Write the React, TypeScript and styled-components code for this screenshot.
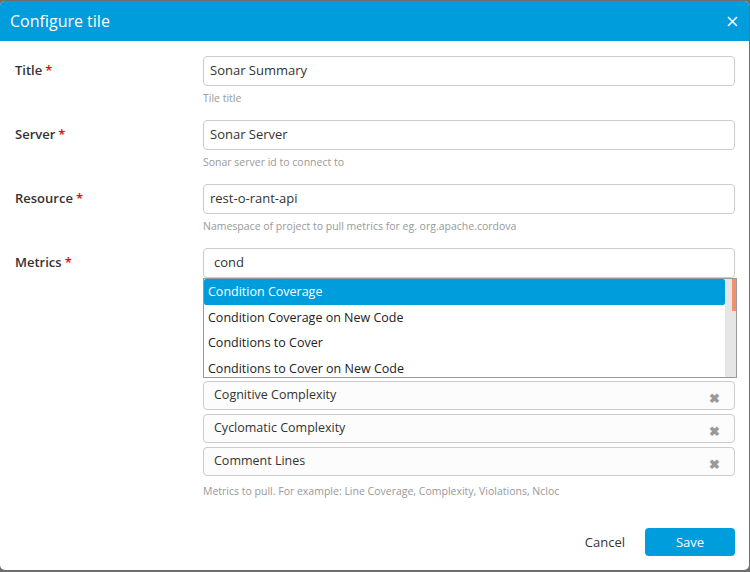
import React from "react";
import styled, { createGlobalStyle } from "styled-components";

const Global = createGlobalStyle`
  html, body { margin: 0; padding: 0; background: #6e6e6e; }
  body { font-family: "Open Sans", "Noto Sans", sans-serif; }
  * { box-sizing: border-box; }
`;

const Page = styled.div`
  width: 750px;
  height: 572px;
  padding: 1px 1px 2px 0;
`;

const Dialog = styled.div`
  width: 749px;
  height: 569px;
  background: #fff;
  border-radius: 5px;
  overflow: hidden;
  display: flex;
  flex-direction: column;
`;

const Header = styled.div`
  height: 40px;
  background: #009ddd;
  display: flex;
  align-items: center;
  justify-content: space-between;
  padding: 0 11px 0 10px;
  color: #fff;
`;

const Title = styled.div`
  font-size: 16px;
  font-weight: 400;
`;

const Close = styled.svg`
  width: 11px;
  height: 11px;
  margin-top: 1px;
`;

const Body = styled.div`
  padding: 15px 14px 0 15px;
  display: flex;
  flex-direction: column;
  flex: 1;
`;

const Row = styled.div`
  display: grid;
  grid-template-columns: 188px 532px;
  margin-bottom: 15px;
`;

const Label = styled.div`
  font-size: 13px;
  font-weight: 600;
  color: #333;
  padding-top: 5px;
`;

const Star = styled.span`
  color: #f00;
  margin-left: 3px;
`;

const Field = styled.div`
  display: flex;
  flex-direction: column;
`;

const Input = styled.div<{ $pad?: number }>`
  height: 30px;
  border: 1px solid #ccc;
  border-radius: 4px;
  display: flex;
  align-items: center;
  padding-left: ${(p) => p.$pad ?? 6}px;
  padding-bottom: 2px;
  font-size: 13px;
  color: #333;
`;

const Help = styled.div<{ $top?: number }>`
  font-size: 10.5px;
  color: #999;
  margin-top: ${(p) => p.$top ?? 5}px;
  height: 14px;
`;

const List = styled.div`
  width: 534px;
  height: 100px;
  border: 1px solid #999;
  display: flex;
  overflow: hidden;
`;

const Items = styled.div`
  flex: 1;
  display: flex;
  flex-direction: column;
  overflow: hidden;
`;

const Item = styled.div<{ $active?: boolean }>`
  flex-shrink: 0;
  height: 25.5px;
  display: flex;
  align-items: center;
  padding-left: 4px;
  font-size: 12.5px;
  color: ${(p) => (p.$active ? "#fff" : "#222")};
  background: ${(p) => (p.$active ? "#009ddd" : "transparent")};
  border-radius: ${(p) => (p.$active ? "2px" : "0")};
`;

const Track = styled.div`
  width: 11px;
  background: #e6e6e6;
  display: flex;
  justify-content: flex-end;
`;

const Thumb = styled.div`
  width: 4px;
  height: 32px;
  background: #f0906c;
`;

const Tags = styled.div`
  display: flex;
  flex-direction: column;
  gap: 4px;
  margin-top: 3px;
`;

const Tag = styled.div`
  height: 29px;
  border: 1px solid #ccc;
  border-radius: 4px;
  background: #fcfcfc;
  display: flex;
  align-items: center;
  justify-content: space-between;
  padding: 0 14px 0 10px;
  font-size: 12.5px;
  color: #333;
`;

const TagText = styled.span`
  margin-top: -3px;
`;

const TagX = styled.span`
  color: #999;
  font-size: 13px;
  font-weight: 700;
  margin-top: 5px;
`;

const Footer = styled.div`
  margin-top: auto;
  display: flex;
  justify-content: flex-end;
  align-items: center;
  gap: 20px;
  padding: 0 0 14px 0;
`;

const Cancel = styled.div`
  font-size: 13px;
  color: #333;
  margin-left: 2px;
`;

const Save = styled.div`
  width: 90px;
  height: 28px;
  background: #009ddd;
  border-radius: 4px;
  color: #fff;
  font-size: 13px;
  display: flex;
  align-items: center;
  justify-content: center;
  padding-bottom: 1px;
`;

export default function App() {
  return (
    <Page>
      <Global />
      <Dialog>
        <Header>
          <Title>Configure tile</Title>
          <Close viewBox="0 0 11 11">
            <path d="M1 1 L10 10 M10 1 L1 10" stroke="#fff" strokeWidth="1.6" />
          </Close>
        </Header>
        <Body>
          <Row>
            <Label>
              Title<Star>*</Star>
            </Label>
            <Field>
              <Input>Sonar Summary</Input>
              <Help>Tile title</Help>
            </Field>
          </Row>
          <Row>
            <Label>
              Server<Star>*</Star>
            </Label>
            <Field>
              <Input>Sonar Server</Input>
              <Help>Sonar server id to connect to</Help>
            </Field>
          </Row>
          <Row>
            <Label>
              Resource<Star>*</Star>
            </Label>
            <Field>
              <Input>rest-o-rant-api</Input>
              <Help>Namespace of project to pull metrics for eg. org.apache.cordova</Help>
            </Field>
          </Row>
          <Row>
            <Label>
              Metrics<Star>*</Star>
            </Label>
            <Field>
              <Input $pad={10}>cond</Input>
              <List>
                <Items>
                  <Item $active>Condition Coverage</Item>
                  <Item>Condition Coverage on New Code</Item>
                  <Item>Conditions to Cover</Item>
                  <Item>Conditions to Cover on New Code</Item>
                </Items>
                <Track>
                  <Thumb />
                </Track>
              </List>
              <Tags>
                {["Cognitive Complexity", "Cyclomatic Complexity", "Comment Lines"].map((t) => (
                  <Tag key={t}>
                    <TagText>{t}</TagText>
                    <TagX>✖</TagX>
                  </Tag>
                ))}
              </Tags>
              <Help $top={8}>Metrics to pull. For example: Line Coverage, Complexity, Violations, Ncloc</Help>
            </Field>
          </Row>
          <Footer>
            <Cancel>Cancel</Cancel>
            <Save>Save</Save>
          </Footer>
        </Body>
      </Dialog>
    </Page>
  );
}
